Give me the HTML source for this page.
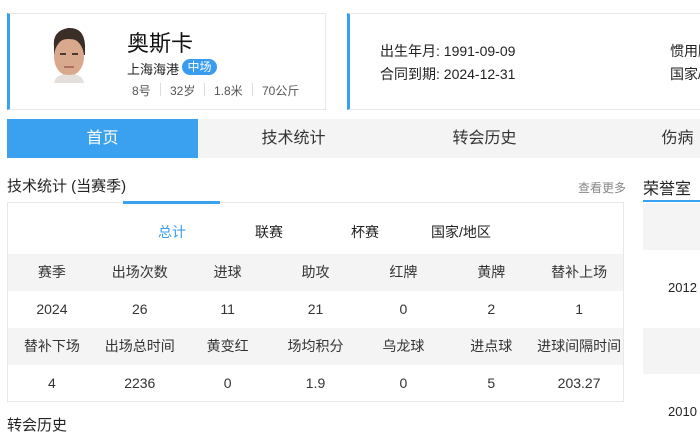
<!DOCTYPE html><html><head><meta charset="utf-8"><style>
*{margin:0;padding:0;box-sizing:border-box}
body{width:700px;height:424px;overflow:hidden;background:#fff;font-family:"Liberation Sans","Noto Sans CJK SC",sans-serif;color:#222;position:relative}
.a{position:absolute;white-space:nowrap}
.card{position:absolute;top:13px;height:97px;border:1px solid #e8e8e8;border-left:3px solid #3aa0f0;background:#fff}
.tabs{position:absolute;top:119px;left:7px;width:700px;height:39px;background:#f4f4f4}
.tab{position:absolute;top:0;height:39px;line-height:39px;text-align:center;font-size:16px;color:#333}
.box{position:absolute;left:7px;top:202px;width:617px;height:200px;border:1px solid #e8e8e8}
.row{position:absolute;left:0;width:615px;height:37px;display:flex}
.row div{width:88px;text-align:center;line-height:37px;font-size:14px;color:#333}
.g{background:#f4f4f4}
</style></head><body>
<div class="card" style="left:7px;width:319px"></div>
<svg class="a" style="left:48px;top:25px" width="42" height="58" viewBox="0 0 42 58">
<path d="M6 22 Q4 6 20 3 Q36 2 37 20 L37 30 L6 30Z" fill="#3a2e27"/>
<ellipse cx="21" cy="32" rx="15" ry="19" fill="#d9a98e"/>
<path d="M7 20 Q10 8 22 8 Q34 8 36 20 Q30 14 21 14 Q12 14 7 20Z" fill="#3a2e27"/>
<path d="M6 58 Q8 48 21 50 Q34 48 36 58Z" fill="#e6e0dc"/>
<rect x="12" y="28" width="6" height="2" fill="#4a3a30"/><rect x="24" y="28" width="6" height="2" fill="#4a3a30"/>
<rect x="16" y="41" width="10" height="2" fill="#b07060"/>
</svg>
<div class="a" style="left:127px;top:26px;font-size:22px;color:#111">奥斯卡</div>
<div class="a" style="left:127px;top:59px;font-size:13px;color:#222">上海海港</div>
<div class="a" style="left:182px;top:59px;width:35px;height:16px;border-radius:8px;background:#3a9cf0;color:#fff;font-size:12px;line-height:16px;text-align:center">中场</div>
<div class="a" style="left:132px;top:82px;font-size:12px;color:#555">8号</div>
<div class="a" style="left:160px;top:83px;width:1px;height:13px;background:#ddd"></div>
<div class="a" style="left:170px;top:82px;font-size:12px;color:#555">32岁</div>
<div class="a" style="left:204px;top:83px;width:1px;height:13px;background:#ddd"></div>
<div class="a" style="left:214px;top:82px;font-size:12px;color:#555">1.8米</div>
<div class="a" style="left:252px;top:83px;width:1px;height:13px;background:#ddd"></div>
<div class="a" style="left:262px;top:82px;font-size:12px;color:#555">70公斤</div>
<div class="card" style="left:347px;width:360px"></div>
<div class="a" style="left:380px;top:41px;font-size:14px">出生年月: 1991-09-09</div>
<div class="a" style="left:380px;top:64px;font-size:14px">合同到期: 2024-12-31</div>
<div class="a" style="left:670px;top:41px;font-size:14px">惯用脚</div>
<div class="a" style="left:670px;top:64px;font-size:14px">国家/地区</div>
<div class="tabs"></div>
<div class="tab" style="left:7px;width:191px;background:#3aa0f0;color:#fff;top:119px">首页</div>
<div class="tab" style="left:198px;width:191px;top:119px">技术统计</div>
<div class="tab" style="left:389px;width:191px;top:119px">转会历史</div>
<div class="tab" style="left:640px;width:75px;top:119px">伤病</div>
<div class="a" style="left:7px;top:175px;font-size:15px;color:#222">技术统计 (当赛季)</div>
<div class="a" style="left:578px;top:179px;font-size:12px;color:#888">查看更多</div>
<div class="a" style="left:643px;top:175px;font-size:16px;color:#222">荣誉室</div>
<div class="box">
<div class="a" style="left:115px;top:-2px;width:97px;height:3px;background:#3aa0f0"></div>
<div class="a" style="left:150px;top:19px;font-size:14px;color:#3a9cf0">总计</div>
<div class="a" style="left:247px;top:19px;font-size:14px">联赛</div>
<div class="a" style="left:343px;top:19px;font-size:14px">杯赛</div>
<div class="a" style="left:423px;top:19px;font-size:14px">国家/地区</div>
<div class="row g" style="top:51px"><div>赛季</div><div>出场次数</div><div>进球</div><div>助攻</div><div>红牌</div><div>黄牌</div><div>替补上场</div></div>
<div class="row" style="top:88px"><div>2024</div><div>26</div><div>11</div><div>21</div><div>0</div><div>2</div><div>1</div></div>
<div class="row g" style="top:125px"><div>替补下场</div><div>出场总时间</div><div>黄变红</div><div>场均积分</div><div>乌龙球</div><div>进点球</div><div>进球间隔时间</div></div>
<div class="row" style="top:162px"><div>4</div><div>2236</div><div>0</div><div>1.9</div><div>0</div><div>5</div><div>203.27</div></div>
</div>
<div class="a" style="left:643px;top:200px;width:57px;height:2px;background:#3aa0f0"></div>
<div class="a" style="left:643px;top:203px;width:57px;height:47px;background:#f4f4f4"></div>
<div class="a" style="left:643px;top:328px;width:57px;height:46px;background:#f4f4f4"></div>
<div class="a" style="left:668px;top:280px;font-size:13px">2012</div>
<div class="a" style="left:668px;top:404px;font-size:13px">2010</div>
<div class="a" style="left:7px;top:414px;font-size:15px">转会历史</div>
</body></html>
